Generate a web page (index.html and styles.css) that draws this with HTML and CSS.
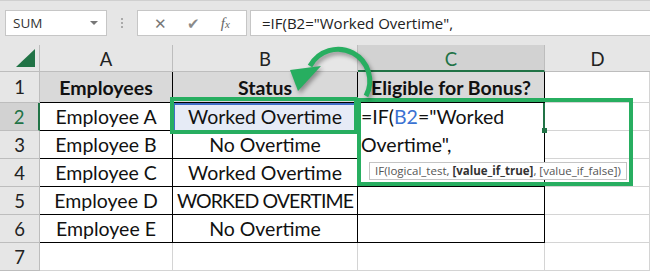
FILE: index.html
```html
<!DOCTYPE html>
<html lang="en">
<head>
  <meta charset="UTF-8" />
  <title>Excel IF formula</title>
  <link rel="stylesheet" href="styles.css">
</head>
<body>
  <div class="window">
    <div class="formula-row">
      <div class="name-box">
        <span>SUM</span>
        <span class="caret"></span>
      </div>
      <div class="grip"><i></i><i></i><i></i></div>
      <div class="fx-buttons">
        <span class="fx-btn cancel">&#x2715;</span>
        <span class="fx-btn enter">&#x2714;</span>
        <span class="fx-btn fx"><i>f</i><small>x</small></span>
      </div>
      <div class="formula-input">=IF(B2="Worked Overtime",</div>
    </div>

    <div class="sheet">
      <div class="corner"><span class="tri"></span></div>
      <div class="col-head">A</div>
      <div class="col-head">B</div>
      <div class="col-head active">C</div>
      <div class="col-head last">D</div>

      <div class="row-head">1</div>
      <div class="cell tbl head">Employees</div>
      <div class="cell tbl head">Status</div>
      <div class="cell tbl head">Eligible for Bonus?</div>
      <div class="cell"></div>

      <div class="row-head active">2</div>
      <div class="cell tbl">Employee A</div>
      <div class="cell tbl ref">Worked Overtime</div>
      <div class="cell tbl"></div>
      <div class="cell"></div>

      <div class="row-head">3</div>
      <div class="cell tbl">Employee B</div>
      <div class="cell tbl">No Overtime</div>
      <div class="cell tbl"></div>
      <div class="cell"></div>

      <div class="row-head">4</div>
      <div class="cell tbl">Employee C</div>
      <div class="cell tbl">Worked Overtime</div>
      <div class="cell tbl"></div>
      <div class="cell"></div>

      <div class="row-head">5</div>
      <div class="cell tbl">Employee D</div>
      <div class="cell tbl caps">WORKED OVERTIME</div>
      <div class="cell tbl"></div>
      <div class="cell"></div>

      <div class="row-head">6</div>
      <div class="cell tbl">Employee E</div>
      <div class="cell tbl">No Overtime</div>
      <div class="cell tbl"></div>
      <div class="cell"></div>

      <div class="row-head">7</div>
      <div class="cell"></div>
      <div class="cell"></div>
      <div class="cell"></div>
      <div class="cell"></div>
    </div>

    <!-- in-cell editor over C2:C3 -->
    <div class="editor">=IF(<span class="ref-text">B2</span>="Worked Overtime",</div>
    <span class="handle"></span>
    <div class="tip">IF(logical_test, <b>[value_if_true]</b>, [value_if_false])</div>

    <!-- annotations -->
    <div class="mark mark-b2"></div>
    <div class="mark mark-c2"></div>
    <svg class="arrow" width="110" height="80" viewBox="0 0 110 80">
      <path d="M86 68 A31 31 0 1 0 30 38" fill="none" stroke="#27ae60" stroke-width="5" />
      <polygon points="10,42 41,38 18,63" fill="#27ae60" />
    </svg>
  </div>
</body>
</html>
```

FILE: styles.css
```css
* {
  box-sizing: border-box;
  margin: 0;
  padding: 0;
}

body {
  width: 650px;
  height: 271px;
  overflow: hidden;
  background: #fff;
  font-family: 'Lato', 'Noto Sans', sans-serif;
}

.window {
  position: relative;
  width: 650px;
  height: 271px;
  overflow: hidden;
}

/* formula bar */
.formula-row {
  display: flex;
  align-items: flex-start;
  height: 45px;
  padding: 9px 0 0 5px;
  background: #e6e6e6;
  border-top: 1px solid #d0d0d0;
}

.name-box {
  display: flex;
  align-items: center;
  justify-content: space-between;
  width: 102px;
  height: 26px;
  padding: 0 8px 0 7px;
  background: #fff;
  border: 1px solid #c6c6c6;
  font-family: 'Open Sans', sans-serif;
  font-size: 13.5px;
  color: #333;
}

.caret {
  width: 0;
  height: 0;
  border-left: 4px solid transparent;
  border-right: 4px solid transparent;
  border-top: 4px solid #777;
}

.grip {
  width: 30px;
  height: 26px;
  display: flex;
  flex-direction: column;
  align-items: center;
  justify-content: center;
  gap: 2px;
}

.grip i {
  width: 2px;
  height: 2px;
  background: #aaa;
}

.fx-buttons {
  display: flex;
  align-items: center;
  justify-content: space-around;
  width: 110px;
  height: 26px;
  padding: 0 6px;
  background: #fff;
  border: 1px solid #c6c6c6;
  color: #777;
}

.fx-btn {
  font-size: 15px;
  line-height: 1;
}

.fx-btn.enter {
  font-size: 15px;
  color: #8a8a8a;
}

.fx-btn.fx {
  font-family: 'Liberation Serif', serif;
  font-size: 15px;
  color: #666;
}

.fx-btn.fx small {
  font-size: 11px;
  font-style: italic;
}

.formula-input {
  flex: 1;
  height: 26px;
  margin-left: 3px;
  padding: 2px 0 0 11px;
  background: #fff;
  border: 1px solid #c6c6c6;
  border-right: none;
  font-family: 'Open Sans', sans-serif;
  font-size: 15px;
  color: #222;
  white-space: nowrap;
}

/* grid */
.sheet {
  display: grid;
  grid-template-columns: 40px 133px 185px 187px 105px;
  grid-template-rows: 27px 31px repeat(6, 28px);
  font-size: 19.5px;
  color: #111;
}

.corner,
.col-head,
.row-head {
  background: #e6e6e6;
  color: #222;
  display: flex;
  align-items: center;
  justify-content: center;
  border-right: 1px solid #bdbdbd;
  border-bottom: 1px solid #bdbdbd;
}

.col-head {
  font-size: 18.5px;
  padding-top: 2px;
}

.col-head.last {
  border-right: none;
}

.col-head.active {
  background: #d2d2d2;
  color: #217346;
  border-bottom: 2px solid #217346;
}

.row-head {
  font-size: 18.5px;
}

.row-head.active {
  background: #d2d2d2;
  color: #217346;
  border-right: 2px solid #217346;
}

.corner {
  align-items: flex-end;
  justify-content: flex-end;
  padding: 0 4px 4px 0;
}

.tri {
  width: 0;
  height: 0;
  border-left: 19px solid transparent;
  border-bottom: 18px solid #217346;
}

.cell {
  display: flex;
  align-items: center;
  justify-content: center;
  white-space: nowrap;
  border-right: 1px solid #d4d4d4;
  border-bottom: 1px solid #d4d4d4;
}

.cell.tbl {
  border-right-color: #000;
  border-bottom-color: #000;
}

.cell.head {
  background: #d9d9d9;
  font-weight: bold;
  padding-top: 1px;
}

.cell.caps {
  letter-spacing: -0.9px;
}

.cell.ref {
  background: #e6ebf6;
  box-shadow: inset 0 2px 0 #3f6fc6, inset 2px 0 0 #3f6fc6;
}

/* overlays */
.editor {
  position: absolute;
  left: 358px;
  top: 103px;
  width: 186px;
  height: 56px;
  padding: 0 2px 0 3px;
  background: #fff;
  font-size: 19.5px;
  line-height: 28px;
  color: #111;
}

.ref-text {
  color: #3a72d2;
}

.handle {
  position: absolute;
  left: 543px;
  top: 103px;
  width: 2px;
  height: 26px;
  background: #217346;
}

.handle::after {
  content: '';
  position: absolute;
  left: -1px;
  top: 25px;
  width: 5px;
  height: 5px;
  background: #217346;
}

.tip {
  position: absolute;
  left: 369px;
  top: 162px;
  width: 258px;
  height: 18px;
  padding-left: 5px;
  background: #fff;
  border: 1px solid #c4c4c4;
  font-family: 'Open Sans', sans-serif;
  font-size: 11.5px;
  line-height: 16px;
  color: #555;
  white-space: nowrap;
  overflow: hidden;
}

.tip b {
  color: #333;
}

.mark {
  position: absolute;
  border: 4px solid #27ae60;
}

.mark-b2 {
  left: 170px;
  top: 97px;
  width: 188px;
  height: 37px;
}

.mark-c2 {
  left: 357px;
  top: 98px;
  width: 276px;
  height: 88px;
}

.arrow {
  position: absolute;
  left: 280px;
  top: 28px;
  filter: drop-shadow(2px 3px 2px rgba(0, 0, 0, 0.35));
}
```
